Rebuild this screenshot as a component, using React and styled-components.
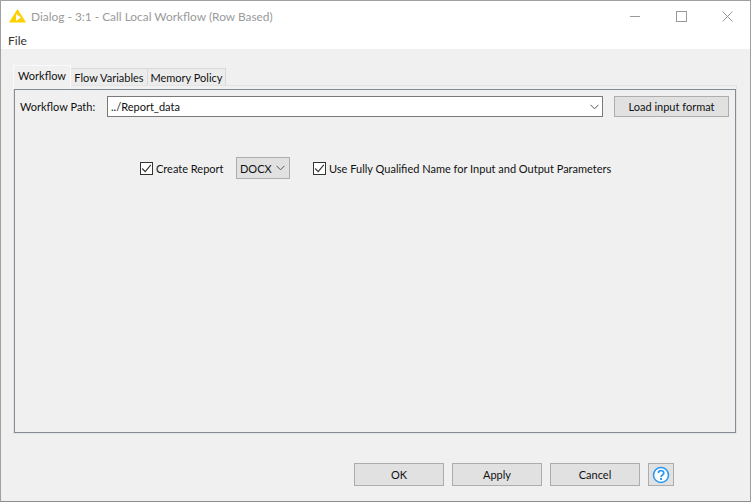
import React from "react";
import styled, { createGlobalStyle } from "styled-components";

const Global = createGlobalStyle`
	html, body {
		margin: 0;
		padding: 0;
		background: #f0f0f0;
	}
	* {
		box-sizing: border-box;
	}
`;

const Win = styled.div`
	width: 751px;
	height: 502px;
	display: flex;
	flex-direction: column;
	background: #f0f0f0;
	border: 1px solid #a0a0a0;
	border-bottom-color: #8c8c8c;
	font-family: "Lato", "Open Sans", sans-serif;
	font-size: 11px;
	color: #111;
	overflow: hidden;
`;

const TitleBar = styled.div`
	height: 30px;
	flex: none;
	display: flex;
	align-items: center;
	padding-left: 8px;
	background: #fff;
`;

const TitleText = styled.div`
	margin-left: 5px;
	font-size: 11.9px;
	color: #9a9a9a;
	flex: 1;
`;

const WinButton = styled.div`
	width: 46px;
	height: 30px;
	display: flex;
	align-items: center;
	justify-content: center;
`;

const MenuBar = styled.div`
	height: 18px;
	flex: none;
	background: #fff;
	padding-left: 7px;
	font-size: 12px;
	line-height: 20px;
	color: #333;
`;

const Body = styled.div`
	flex: 1;
	display: flex;
	flex-direction: column;
	padding: 16px 13px 0 12px;
`;

const Tabs = styled.div`
	display: flex;
	align-items: flex-end;
	height: 20px;
	flex: none;
`;

const Tab = styled.div`
	width: ${({ $w }) => $w}px;
	height: ${({ $active }) => ($active ? "24px" : "17px")};
	margin-bottom: ${({ $active }) => ($active ? "-4px" : "0")};
	background: ${({ $active }) => ($active ? "#f0f0f0" : "#ececec")};
	border: 1px solid ${({ $active }) => ($active ? "#fafafa" : "#d9d9d9")};
	border-bottom: none;
	border-left-width: ${({ $active }) => ($active ? "1px" : "0")};
	padding-top: ${({ $active }) => ($active ? "1px" : "0")};
	line-height: 17px;
	text-align: center;
	color: #111;
	white-space: nowrap;
	position: relative;
	z-index: ${({ $active }) => ($active ? 1 : 0)};
`;

const Panel = styled.div`
	height: 349px;
	flex: none;
	border: 1px solid #e3e3e3;
	padding-top: 3px;
	background: #f0f0f0;
`;

const PanelInner = styled.div`
	height: 100%;
	border: 1px solid #858b92;
	padding: 6px 5px 0 5px;
	position: relative;
	z-index: 2;
`;

const PathRow = styled.div`
	display: flex;
	align-items: center;
	height: 21px;
	line-height: 18px;
`;

const PathLabel = styled.div`
	width: 87px;
	flex: none;
`;

const PathInput = styled.div`
	width: 496px;
	height: 21px;
	flex: none;
	background: #fff;
	border: 1px solid #7a7a7a;
	display: flex;
	align-items: center;
	justify-content: space-between;
	padding: 0 3px 0 3px;
`;

const Button = styled.div`
	background: #e1e1e1;
	border: 1px solid #adadad;
	display: flex;
	align-items: center;
	justify-content: center;
	height: 23px;
	width: ${({ $w }) => $w}px;
	flex: none;
	color: #111;
`;

const LoadButton = styled(Button)`
	height: 21px;
	margin-left: 11px;
`;

const OptionsRow = styled.div`
	display: flex;
	align-items: center;
	height: 22px;
	margin-top: 40px;
	padding-left: 120px;
`;

const Check = styled.div`
	width: 13px;
	height: 13px;
	flex: none;
	background: #fff;
	border: 1px solid #333;
	display: flex;
	align-items: center;
	justify-content: center;
	margin-right: 3px;
`;

const OptionLabel = styled.span`
	width: ${({ $w }) => $w}px;
	flex: none;
	white-space: nowrap;
`;

const Format = styled.div`
	width: 54px;
	height: 22px;
	margin-left: 10px;
	margin-right: 23px;
	background: #e1e1e1;
	border: 1px solid #adadad;
	display: flex;
	align-items: center;
	justify-content: space-between;
	padding: 0 4px 0 3px;
`;

const Footer = styled.div`
	display: flex;
	align-items: center;
	justify-content: flex-end;
	gap: 8px;
	margin-top: 29px;
	margin-right: 63px;
`;

const Chevron = () => (
	<svg width="9" height="6" viewBox="0 0 9 6">
		<path d="M0.5 0.8 L4.5 4.8 L8.5 0.8" fill="none" stroke="#555" strokeWidth="1" />
	</svg>
);

const Tick = () => (
	<svg width="11" height="11" viewBox="0 0 11 11">
		<path d="M1.2 5.5 L4.2 8.6 L9.8 1.8" fill="none" stroke="#333" strokeWidth="1.1" />
	</svg>
);

const KnimeIcon = () => (
	<svg width="17" height="14" viewBox="0 0 17 14">
		<path d="M8.5 0 L17 13.5 L0 13.5 Z" fill="#fdd000" />
		<path d="M7 5 L12 8.5 L7 12 Z" fill="#fff" />
	</svg>
);

const HelpIcon = () => (
	<svg width="18" height="18" viewBox="0 0 18 18">
		<circle cx="9" cy="9" r="7.5" fill="#fff" stroke="#2b9af3" strokeWidth="1.6" />
		<path d="M6.4 7 C6.4 3.9 11.8 3.9 11.8 7 C11.8 9 9.1 9 9.1 11" fill="none" stroke="#2b9af3" strokeWidth="1.7" />
		<rect x="8.1" y="12" width="2" height="2" fill="#2b9af3" />
	</svg>
);

const App = () => {
	return (
		<Win>
			<Global />
			<TitleBar>
				<KnimeIcon />
				<TitleText>Dialog - 3:1 - Call Local Workflow (Row Based)</TitleText>
				<WinButton>
					<svg width="11" height="11" viewBox="0 0 11 11">
						<path d="M0 5.5 H10" stroke="#999" strokeWidth="1" />
					</svg>
				</WinButton>
				<WinButton>
					<svg width="11" height="11" viewBox="0 0 11 11">
						<rect x="0.5" y="0.5" width="10" height="10" fill="none" stroke="#999" />
					</svg>
				</WinButton>
				<WinButton>
					<svg width="11" height="11" viewBox="0 0 11 11">
						<path d="M0.5 0.5 L10.5 10.5 M10.5 0.5 L0.5 10.5" stroke="#999" strokeWidth="1" />
					</svg>
				</WinButton>
			</TitleBar>
			<MenuBar>File</MenuBar>
			<Body>
				<Tabs>
					<Tab $active $w={58}>Workflow</Tab>
					<Tab $w={77}>Flow Variables</Tab>
					<Tab $w={78}>Memory Policy</Tab>
				</Tabs>
				<Panel>
					<PanelInner>
						<PathRow>
							<PathLabel>Workflow Path:</PathLabel>
							<PathInput>
								<span>../Report_data</span>
								<Chevron />
							</PathInput>
							<LoadButton $w={115}>Load input format</LoadButton>
						</PathRow>
						<OptionsRow>
							<Check>
								<Tick />
							</Check>
							<OptionLabel $w={70}>Create Report</OptionLabel>
							<Format>
								<span>DOCX</span>
								<Chevron />
							</Format>
							<Check>
								<Tick />
							</Check>
							<OptionLabel $w={281}>Use Fully Qualified Name for Input and Output Parameters</OptionLabel>
						</OptionsRow>
					</PanelInner>
				</Panel>
				<Footer>
					<Button $w={90}>OK</Button>
					<Button $w={90}>Apply</Button>
					<Button $w={90}>Cancel</Button>
					<Button $w={26}>
						<HelpIcon />
					</Button>
				</Footer>
			</Body>
		</Win>
	);
};

export default App;
